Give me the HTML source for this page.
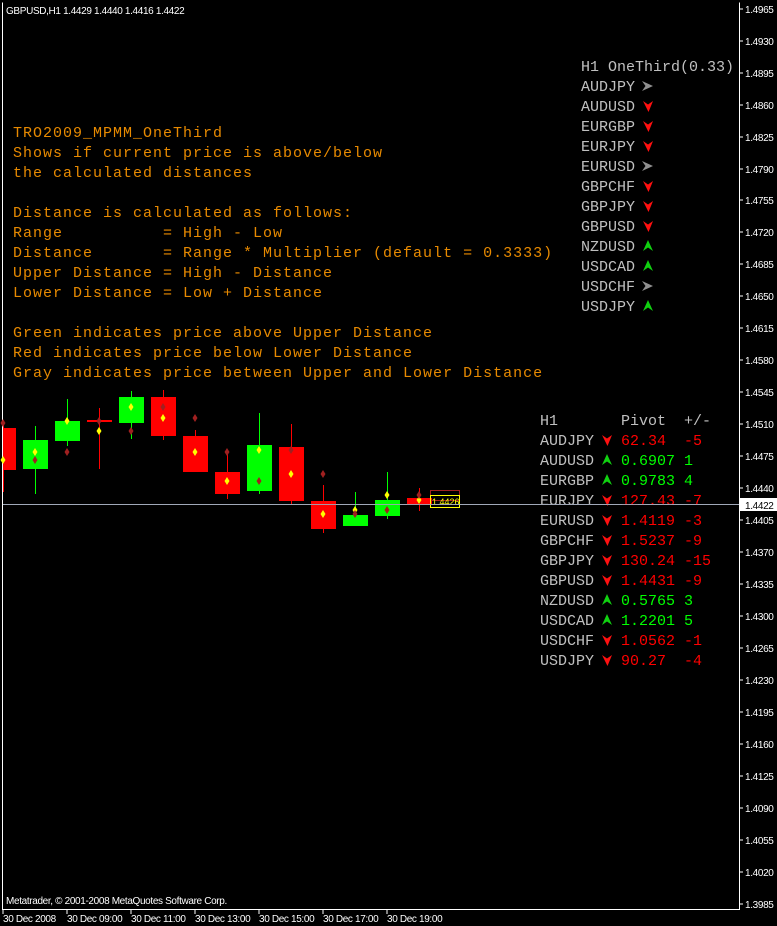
<!DOCTYPE html>
<html><head><meta charset="utf-8"><style>
html,body{margin:0;padding:0;background:#000;width:777px;height:926px;overflow:hidden}
svg{display:block}
.m{font-family:"Liberation Mono",monospace;font-size:15px}
.o{fill:#e88a00;letter-spacing:1px}
.g{fill:#c0c0c0}
.r{fill:#ff0000}
.gr{fill:#00ff00}
.ax{font-family:"Liberation Sans",sans-serif;font-size:10px;letter-spacing:-0.35px;fill:#fff}
</style></head><body>
<svg width="777" height="926" viewBox="0 0 777 926">
<defs>
<polygon id="dn" points="0,0 5,3.5 10,0 5.5,11" fill="#ff1010"/>
<polygon id="up" points="0,11 5,7.5 10,11 5,0" fill="#10d010"/>
<polygon id="rt" points="0,0 11,5 0,10 3.5,5" fill="#909090"/>
<polygon id="dy" points="0,-4 2.5,0 0,4 -2.5,0" fill="#ffff00"/>
<polygon id="dr" points="0,-4 2.5,0 0,4 -2.5,0" fill="#a02020"/>
</defs>
<rect width="777" height="926" fill="#000"/>
<path d="M2.5 2.5 V909.5 H739.5 V2.5" fill="none" stroke="#fff" stroke-width="1"/>
<g class="ax">
<text x="745" y="13">1.4965</text><text x="745" y="45">1.4930</text><text x="745" y="77">1.4895</text><text x="745" y="109">1.4860</text><text x="745" y="141">1.4825</text><text x="745" y="173">1.4790</text><text x="745" y="204">1.4755</text><text x="745" y="236">1.4720</text><text x="745" y="268">1.4685</text><text x="745" y="300">1.4650</text><text x="745" y="332">1.4615</text><text x="745" y="364">1.4580</text><text x="745" y="396">1.4545</text><text x="745" y="428">1.4510</text><text x="745" y="460">1.4475</text><text x="745" y="492">1.4440</text><text x="745" y="524">1.4405</text><text x="745" y="556">1.4370</text><text x="745" y="588">1.4335</text><text x="745" y="620">1.4300</text><text x="745" y="652">1.4265</text><text x="745" y="684">1.4230</text><text x="745" y="716">1.4195</text><text x="745" y="748">1.4160</text><text x="745" y="780">1.4125</text><text x="745" y="812">1.4090</text><text x="745" y="844">1.4055</text><text x="745" y="876">1.4020</text><text x="745" y="908">1.3985</text>
</g>
<g stroke="#fff">
<path d="M740 9h3M740 41h3M740 73h3M740 105h3M740 137h3M740 169h3M740 200h3M740 232h3M740 264h3M740 296h3M740 328h3M740 360h3M740 392h3M740 424h3M740 456h3M740 488h3M740 520h3M740 552h3M740 584h3M740 616h3M740 648h3M740 680h3M740 712h3M740 744h3M740 776h3M740 808h3M740 840h3M740 872h3M740 904h3"/>
<path d="M3 910v4M67 910v4M131 910v4M195 910v4M259 910v4M323 910v4M387 910v4"/>
</g>
<g class="ax">
<text x="3" y="922">30 Dec 2008</text><text x="67" y="922">30 Dec 09:00</text><text x="131" y="922">30 Dec 11:00</text><text x="195" y="922">30 Dec 13:00</text><text x="259" y="922">30 Dec 15:00</text><text x="323" y="922">30 Dec 17:00</text><text x="387" y="922">30 Dec 19:00</text>
<text x="6" y="904">Metatrader, © 2001-2008 MetaQuotes Software Corp.</text>
<text x="6" y="14">GBPUSD,H1  1.4429 1.4440 1.4416 1.4422</text>
</g>
<line x1="3" y1="504.5" x2="739" y2="504.5" stroke="#a0a8b8"/>
<rect x="740" y="498" width="37" height="13" fill="#fff"/>
<text x="745" y="509" font-family="Liberation Sans,sans-serif" font-size="10px" letter-spacing="-0.35px" fill="#000">1.4422</text>
<g>
<rect x="3" y="428" width="13" height="42" fill="#ff0000"/><line x1="3.5" y1="420" x2="3.5" y2="492" stroke="#ff0000"/>
<line x1="35.5" y1="426" x2="35.5" y2="494" stroke="#00ff00"/><rect x="23" y="440" width="25" height="29" fill="#00ff00"/>
<line x1="67.5" y1="399" x2="67.5" y2="446" stroke="#00ff00"/><rect x="55" y="421" width="25" height="20" fill="#00ff00"/>
<line x1="99.5" y1="408" x2="99.5" y2="469" stroke="#ff0000"/><rect x="87" y="420" width="25" height="2" fill="#ff0000"/>
<line x1="131.5" y1="391" x2="131.5" y2="439" stroke="#00ff00"/><rect x="119" y="397" width="25" height="26" fill="#00ff00"/>
<line x1="163.5" y1="390" x2="163.5" y2="440" stroke="#ff0000"/><rect x="151" y="397" width="25" height="39" fill="#ff0000"/>
<line x1="195.5" y1="430" x2="195.5" y2="472" stroke="#ff0000"/><rect x="183" y="436" width="25" height="36" fill="#ff0000"/>
<line x1="227.5" y1="452" x2="227.5" y2="499" stroke="#ff0000"/><rect x="215" y="472" width="25" height="22" fill="#ff0000"/>
<line x1="259.5" y1="413" x2="259.5" y2="494" stroke="#00ff00"/><rect x="247" y="445" width="25" height="46" fill="#00ff00"/>
<line x1="291.5" y1="424" x2="291.5" y2="504" stroke="#ff0000"/><rect x="279" y="447" width="25" height="54" fill="#ff0000"/>
<line x1="323.5" y1="485" x2="323.5" y2="533" stroke="#ff0000"/><rect x="311" y="501" width="25" height="28" fill="#ff0000"/>
<line x1="355.5" y1="492" x2="355.5" y2="520" stroke="#00ff00"/><rect x="343" y="515" width="25" height="11" fill="#00ff00"/>
<line x1="387.5" y1="472" x2="387.5" y2="519" stroke="#00ff00"/><rect x="375" y="500" width="25" height="16" fill="#00ff00"/>
<line x1="419.5" y1="488" x2="419.5" y2="511" stroke="#ff0000"/><rect x="407" y="498" width="25" height="7" fill="#ff0000"/>
<rect x="430.5" y="490.5" width="29" height="10" fill="none" stroke="#a02020"/>
<rect x="430.5" y="495.5" width="29" height="12" fill="none" stroke="#ffff00"/>
<text x="432" y="505" font-family="Liberation Sans,sans-serif" font-size="9px" fill="#ffff00">1.4426</text>
</g>
<g>
<use href="#dy" x="3" y="460"/><use href="#dr" x="3" y="423"/>
<use href="#dy" x="35" y="452"/><use href="#dr" x="35" y="460"/>
<use href="#dy" x="67" y="421"/><use href="#dr" x="67" y="452"/>
<use href="#dy" x="99" y="431"/><use href="#dr" x="99" y="421"/>
<use href="#dy" x="131" y="407"/><use href="#dr" x="131" y="431"/>
<use href="#dy" x="163" y="418"/><use href="#dr" x="163" y="407"/>
<use href="#dy" x="195" y="452"/><use href="#dr" x="195" y="418"/>
<use href="#dy" x="227" y="481"/><use href="#dr" x="227" y="452"/>
<use href="#dy" x="259" y="450"/><use href="#dr" x="259" y="481"/>
<use href="#dy" x="291" y="474"/><use href="#dr" x="291" y="450"/>
<use href="#dy" x="323" y="514"/><use href="#dr" x="323" y="474"/>
<use href="#dy" x="355" y="510"/><use href="#dr" x="355" y="514"/>
<use href="#dy" x="387" y="495"/><use href="#dr" x="387" y="510"/>
<use href="#dy" x="419" y="500"/><use href="#dr" x="419" y="495"/>
</g>
<g class="m o">
<text x="13" y="137">TRO2009_MPMM_OneThird</text>
<text x="13" y="157">Shows if current price is above/below</text>
<text x="13" y="177">the calculated distances</text>
<text x="13" y="217">Distance is calculated as follows:</text>
<text x="13" y="237" xml:space="preserve">Range          = High - Low</text>
<text x="13" y="257" xml:space="preserve">Distance       = Range * Multiplier (default = 0.3333)</text>
<text x="13" y="277">Upper Distance = High - Distance</text>
<text x="13" y="297">Lower Distance = Low + Distance</text>
<text x="13" y="337">Green indicates price above Upper Distance</text>
<text x="13" y="357">Red indicates price below Lower Distance</text>
<text x="13" y="377">Gray indicates price between Upper and Lower Distance</text>
</g>
<g class="m g">
<text x="581" y="71">H1 OneThird(0.33)</text>
<text x="581" y="91">AUDJPY</text><text x="581" y="111">AUDUSD</text><text x="581" y="131">EURGBP</text><text x="581" y="151">EURJPY</text><text x="581" y="171">EURUSD</text><text x="581" y="191">GBPCHF</text><text x="581" y="211">GBPJPY</text><text x="581" y="231">GBPUSD</text><text x="581" y="251">NZDUSD</text><text x="581" y="271">USDCAD</text><text x="581" y="291">USDCHF</text><text x="581" y="311">USDJPY</text>
</g>
<use href="#rt" x="642" y="81"/><use href="#dn" x="643" y="101"/><use href="#dn" x="643" y="121"/><use href="#dn" x="643" y="141"/><use href="#rt" x="642" y="161"/><use href="#dn" x="643" y="181"/><use href="#dn" x="643" y="201"/><use href="#dn" x="643" y="221"/><use href="#up" x="643" y="240"/><use href="#up" x="643" y="260"/><use href="#rt" x="642" y="281"/><use href="#up" x="643" y="300"/>
<g class="m g">
<text x="540" y="425">H1</text><text x="621" y="425">Pivot</text><text x="684" y="425">+/-</text>
<text x="540" y="445">AUDJPY</text><text x="540" y="465">AUDUSD</text><text x="540" y="485">EURGBP</text><text x="540" y="505">EURJPY</text><text x="540" y="525">EURUSD</text><text x="540" y="545">GBPCHF</text><text x="540" y="565">GBPJPY</text><text x="540" y="585">GBPUSD</text><text x="540" y="605">NZDUSD</text><text x="540" y="625">USDCAD</text><text x="540" y="645">USDCHF</text><text x="540" y="665">USDJPY</text>
</g>
<g class="m">
<text class="r" x="621" y="445">62.34</text><text class="r" x="684" y="445">-5</text>
<text class="gr" x="621" y="465">0.6907</text><text class="gr" x="684" y="465">1</text>
<text class="gr" x="621" y="485">0.9783</text><text class="gr" x="684" y="485">4</text>
<text class="r" x="621" y="505">127.43</text><text class="r" x="684" y="505">-7</text>
<text class="r" x="621" y="525">1.4119</text><text class="r" x="684" y="525">-3</text>
<text class="r" x="621" y="545">1.5237</text><text class="r" x="684" y="545">-9</text>
<text class="r" x="621" y="565">130.24</text><text class="r" x="684" y="565">-15</text>
<text class="r" x="621" y="585">1.4431</text><text class="r" x="684" y="585">-9</text>
<text class="gr" x="621" y="605">0.5765</text><text class="gr" x="684" y="605">3</text>
<text class="gr" x="621" y="625">1.2201</text><text class="gr" x="684" y="625">5</text>
<text class="r" x="621" y="645">1.0562</text><text class="r" x="684" y="645">-1</text>
<text class="r" x="621" y="665">90.27</text><text class="r" x="684" y="665">-4</text>
</g>
<use href="#dn" x="602" y="435"/><use href="#up" x="602" y="454"/><use href="#up" x="602" y="474"/><use href="#dn" x="602" y="495"/><use href="#dn" x="602" y="515"/><use href="#dn" x="602" y="535"/><use href="#dn" x="602" y="555"/><use href="#dn" x="602" y="575"/><use href="#up" x="602" y="594"/><use href="#up" x="602" y="614"/><use href="#dn" x="602" y="635"/><use href="#dn" x="602" y="655"/>
<line x1="3" y1="504.5" x2="739" y2="504.5" stroke="#a0a8b8" opacity="0.9"/>
</svg>
</body></html>
